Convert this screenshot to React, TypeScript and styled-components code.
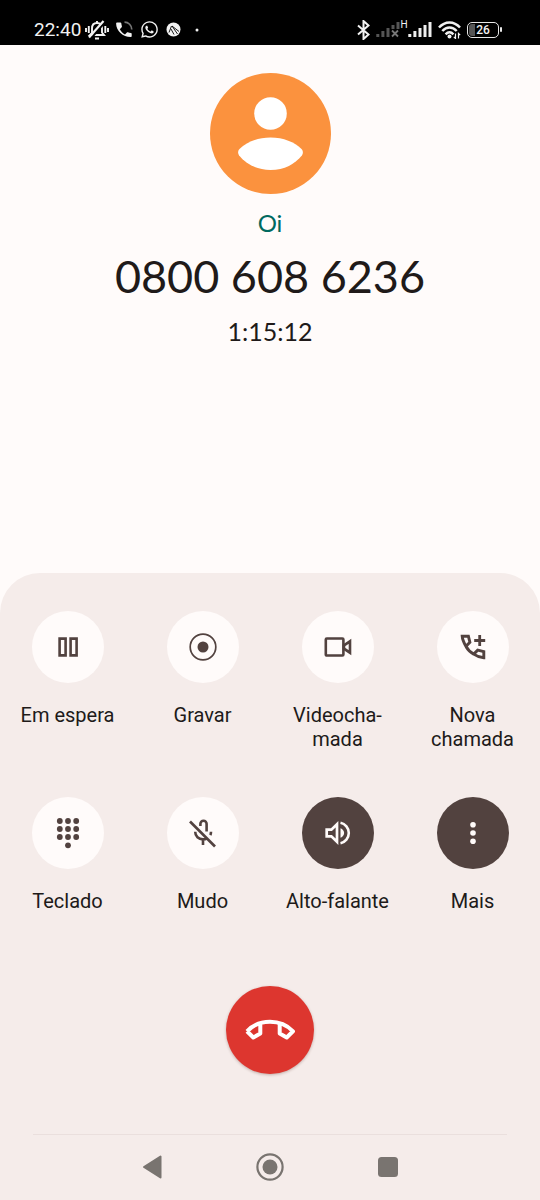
import React from "react";
import styled, { createGlobalStyle, css } from "styled-components";
import { FaWhatsapp } from "react-icons/fa";

const GlobalStyle = createGlobalStyle`
  *, *::before, *::after { box-sizing: border-box; }
  body {
    margin: 0;
    background: #fffbfa;
    font-family: Roboto, "Liberation Sans", sans-serif;
  }
`;

const Screen = styled.div`
  display: flex;
  flex-direction: column;
  min-height: 100vh;
  background: #fffbfa;
  color: #201a19;
`;

const StatusBar = styled.header`
  display: flex;
  justify-content: space-between;
  align-items: center;
  height: 45px;
  padding: 14px 38px 0 34px;
  background: #000;
  color: #f2f2f2;
`;

const StatusGroup = styled.div<{ $gap: number }>`
  display: flex;
  align-items: center;
  gap: ${(p) => p.$gap}px;
`;

const Clock = styled.time`
  font-size: 19px;
  line-height: 24px;
  font-weight: 400;
`;

const Notifications = styled(StatusGroup)`
  padding-left: 4px;
`;

const Network = styled.span`
  display: flex;
  align-items: flex-start;
`;

const NetworkType = styled.span`
  width: 8px;
  font-size: 10px;
  line-height: 8px;
  text-align: center;
`;

const Battery = styled.span`
  display: flex;
  align-items: center;
  gap: 1px;

  &::after {
    content: "";
    width: 2px;
    height: 5px;
    border-radius: 1px;
    background: #e8e8e8;
  }
`;

const BatteryCell = styled.span`
  width: 32px;
  height: 16px;
  border: 1px solid #e8e8e8;
  border-radius: 5px;
  background: linear-gradient(90deg, #555 0 7px, transparent 7px);
  background-clip: content-box;
  padding: 1px;
  font-size: 12px;
  line-height: 12px;
  font-weight: 500;
  text-align: center;
`;

const Caller = styled.main`
  display: flex;
  flex-direction: column;
  align-items: center;
  padding: 28px 16px 32px;
  font-family: Lato, "Open Sans", sans-serif;
  text-align: center;
`;

const Avatar = styled.svg`
  width: 121px;
  height: 121px;
`;

const Carrier = styled.p`
  margin: 13px 0 0;
  font-size: 24px;
  line-height: 32px;
  color: #00695f;
`;

const PhoneNumber = styled.h1`
  margin: 9px 0 0;
  font-size: 45px;
  line-height: 56px;
  font-weight: 400;
`;

const Duration = styled.time`
  margin-top: 11px;
  font-size: 25px;
  line-height: 32px;
`;

const Panel = styled.section`
  display: flex;
  flex-direction: column;
  align-items: center;
  margin-top: auto;
  padding-top: 38px;
  border-radius: 40px 40px 0 0;
  background: #f5ecea;
`;

const Actions = styled.div`
  display: grid;
  grid-template-columns: repeat(4, 1fr);
  row-gap: 46px;
  width: 100%;
`;

const Action = styled.label`
  display: flex;
  flex-direction: column;
  align-items: center;
  gap: 20px;
  font-size: 20px;
  line-height: 24px;
  text-align: center;
`;

const round = css`
  display: flex;
  align-items: center;
  justify-content: center;
  padding: 0;
  border: 0;
  border-radius: 50%;
  cursor: pointer;
`;

const ActionButton = styled.button<{ $active?: boolean }>`
  ${round}
  width: 72px;
  height: 72px;
  background: ${(p) => (p.$active ? "#52423f" : "#fffbfa")};
  color: ${(p) => (p.$active ? "#fffbfa" : "#52423f")};
`;

const HangUp = styled.button`
  ${round}
  width: 88px;
  height: 88px;
  margin-top: 73px;
  background: #dd362f;
  color: #fff;
  box-shadow: 0 1px 3px rgba(80, 30, 20, 0.3);
`;

const NavBar = styled.nav`
  display: flex;
  justify-content: center;
  gap: 90px;
  align-self: stretch;
  margin: 60px 33px 0;
  padding: 18px 0 19px;
  border-top: 1px solid #eadfdd;
`;

const NavButton = styled.button`
  ${round}
  width: 28px;
  height: 28px;
  background: none;
  color: #797470;
`;

const Glyph = ({ children }: { children: React.ReactNode }) => (
  <svg width="32" height="32" viewBox="0 0 32 32" fill="none" stroke="currentColor" strokeWidth="2.6" aria-hidden="true">
    {children}
  </svg>
);

const icons = {
  hold: (
    <Glyph>
      <path d="M7.6 7.6h6v16.8h-6zM18.6 7.6h6v16.8h-6z" />
    </Glyph>
  ),
  record: (
    <Glyph>
      <circle cx="16" cy="16" r="12.8" strokeWidth="1.7" />
      <circle cx="16" cy="16" r="5.5" fill="currentColor" stroke="none" />
    </Glyph>
  ),
  video: (
    <Glyph>
      <rect x="3.8" y="7.5" width="17.6" height="17" rx="1" />
      <path d="M22 14.300l6-4v11.400L22 17.700z" />
    </Glyph>
  ),
  add: (
    <Glyph>
      <path
        d="M5.200 5.200h6.200l1.500 6.100-4 4C7 12 5.400 8.800 5.200 5.200zM8.900 15.300c1.800 3.400 4.400 6 7.800 7.800M16.700 23.100l4-4 6.100 1.500v6.200c-3.600-.2-7-1.600-10.100-3.700z"
        strokeWidth="2.900"
      />
      <path d="M22.700 4v11M17.200 9.500h11" strokeWidth="2.800" />
    </Glyph>
  ),
  keypad: (
    <Glyph>
      <g fill="currentColor" stroke="none">
        {[4, 12, 20].map((y) => [7.8, 16, 24.2].map((x) => <circle key={`${x}-${y}`} cx={x} cy={y} r="2.9" />))}
        <circle cx="16" cy="28.300" r="2.900" />
      </g>
    </Glyph>
  ),
  mute: (
    <Glyph>
      <path d="M13.400 9V6.800a3.100 3.100 0 0 1 6.200 0V14.500M8.200 14.800c0 4.500 3.400 7.600 7.800 7.600 1.500 0 2.900-.4 4-1.100M16 22.400v5.600M24 14.800c0 1.200-.2 2.300-.7 3.300" strokeWidth="2.600" />
      <path d="M3 4.500l25 25" strokeWidth="2.700" />
    </Glyph>
  ),
  speaker: (
    <Glyph>
      <path d="M4.700 12.700h4.700l5.600-5.400v17.400l-5.600-5.400H4.700z" strokeWidth="2.700" />
      <path d="M18.500 11.200c2.200.9 3.600 2.700 3.600 4.800s-1.400 3.900-3.600 4.800z" fill="currentColor" stroke="none" />
      <path d="M18.500 5.800c4.700 1 8.300 5.200 8.300 10.200s-3.600 9.200-8.300 10.200" />
    </Glyph>
  ),
  more: (
    <Glyph>
      <g fill="currentColor" stroke="none">
        <circle cx="16" cy="7.800" r="2.800" />
        <circle cx="16" cy="16" r="2.800" />
        <circle cx="16" cy="24.200" r="2.800" />
      </g>
    </Glyph>
  ),
};

const actions: { id: keyof typeof icons; label: React.ReactNode; active?: boolean }[] = [
  { id: "hold", label: "Em espera" },
  { id: "record", label: "Gravar" },
  { id: "video", label: <>Videocha-<br />mada</> },
  { id: "add", label: <>Nova<br />chamada</> },
  { id: "keypad", label: "Teclado" },
  { id: "mute", label: "Mudo" },
  { id: "speaker", label: "Alto-falante", active: true },
  { id: "more", label: "Mais", active: true },
];

const SilentIcon = () => (
  <svg width="24" height="20" viewBox="0 0 24 20" fill="none" stroke="currentColor" strokeWidth="1.900" aria-hidden="true">
    <path d="M7 14.500V8.500C7 5 9 3 12 3s5 2 5 5.500v4l2 2.500H5l2-2M12 1v2M10 18.500h4" />
    <path d="M1 8v4M3.800 6v7M20.300 6v7M23 8v4" />
    <path d="M5.500 19L20 2" strokeWidth="2" stroke="#000" />
    <path d="M4 17.500L18.500 1" strokeWidth="2.200" />
  </svg>
);

const CallIcon = () => (
  <svg width="17" height="17" viewBox="0 0 17 17" fill="none" aria-hidden="true">
    <path
      d="M1 1.500h3.400c.5 0 .8.300.9.800.1 1.200.3 2.100.6 3 .1.400 0 .7-.2 1L3.800 8.200c1.200 2.300 2.900 4 5.200 5.200l1.900-1.900c.3-.3.600-.3 1-.2.900.300 1.900.500 3 .600.500 0 .8.400.8.900V15c0 .6-.4 1-1 1C6.800 16 .2 10 .1 2.500c0-.6.4-1 .9-1z"
      fill="currentColor"
    />
    <path d="M8.500 1.200c4 0 7.200 3 7.300 7.300" stroke="#777" strokeWidth="1.700" />
  </svg>
);

const BrandIcon = () => (
  <svg width="15" height="15" viewBox="0 0 15 15" aria-hidden="true">
    <circle cx="7.500" cy="7.500" r="7" fill="currentColor" />
    <path d="M5.500 4L3 10.500M6 4l5.500 8M6 4l7 5.500M5 7l3 5.500" stroke="#000" strokeWidth="0.900" />
  </svg>
);

const BluetoothIcon = () => (
  <svg width="13" height="20" viewBox="0 0 13 20" fill="none" stroke="currentColor" strokeWidth="2" aria-hidden="true">
    <path d="M1 5.500l10.500 9L6.500 19V1l5 4.500L1 14.500" />
  </svg>
);

const SignalIcon = ({ missing }: { missing?: boolean }) => (
  <svg width="24" height="17" viewBox="0 0 24 17" stroke={missing ? "#555" : "#eee"} strokeWidth="3" aria-hidden="true">
    <path d={missing ? "M1.800 16v-3M6.900 16V10M12 16V7M17 8V4M22 8V1" : "M1.800 16v-3M6.900 16V10M12 16V7M17 16V4M22 16V1"} />
    {missing && <path d="M16 9.500l6 6M22 9.500l-6 6" strokeWidth="1.800" stroke="#777" />}
  </svg>
);

const WifiIcon = () => (
  <svg width="23" height="18" viewBox="0 0 23 18" fill="none" stroke="currentColor" strokeWidth="2.500" aria-hidden="true">
    <path d="M1 6.500C7-.3 16-.3 22 6.500M4.300 10c4.300-4.700 10.100-4.700 14.400 0M7.600 13.300c2.500-2.600 5.300-2.600 7.800 0" />
    <circle cx="11.500" cy="15.500" r="2" fill="currentColor" stroke="none" />
    <path d="M17.500 12.500v5l-1.700-1.700M20.500 17.500v-5l1.700 1.700" strokeWidth="1.200" />
  </svg>
);

export default function App() {
  return (
    <>
      <GlobalStyle />
      <Screen>
        <StatusBar>
          <StatusGroup $gap={0}>
            <Clock>22:40</Clock>
            <Notifications $gap={7}>
              <SilentIcon />
              <CallIcon />
              <FaWhatsapp size={19} />
              <BrandIcon />
              <svg width="18" height="4" viewBox="0 0 18 4" aria-hidden="true">
                <circle cx="9" cy="2" r="1.500" fill="currentColor" />
              </svg>
            </Notifications>
          </StatusGroup>
          <StatusGroup $gap={6}>
            <BluetoothIcon />
            <Network>
              <SignalIcon missing />
              <NetworkType>H</NetworkType>
              <SignalIcon />
            </Network>
            <WifiIcon />
            <Battery>
              <BatteryCell>26</BatteryCell>
            </Battery>
          </StatusGroup>
        </StatusBar>

        <Caller>
          <Avatar viewBox="0 0 121 121" aria-hidden="true">
            <circle cx="60.500" cy="60.500" r="60.500" fill="#fb923e" />
            <circle cx="60.500" cy="40.500" r="16.300" fill="#fff" />
            <path
              d="M60.500 64.500c13 0 24 4.500 31 11.500 1.700 1.800 1.800 4.500.4 6.500C85 91 74.500 97 60.500 97S36 91 29.100 82.500c-1.400-2-1.300-4.700.4-6.500 7-7 18-11.500 31-11.500z"
              fill="#fff"
            />
          </Avatar>
          <Carrier>Oi</Carrier>
          <PhoneNumber>0800 608 6236</PhoneNumber>
          <Duration>1:15:12</Duration>
        </Caller>

        <Panel>
          <Actions>
            {actions.map(({ id, label, active }) => (
              <Action key={id} htmlFor={id}>
                <ActionButton id={id} type="button" $active={active}>
                  {icons[id]}
                </ActionButton>
                <span>{label}</span>
              </Action>
            ))}
          </Actions>

          <HangUp type="button" aria-label="Encerrar chamada">
            <svg width="52" height="24" viewBox="34.500 48 52 24" fill="none" stroke="currentColor" strokeWidth="4" strokeLinejoin="round" aria-hidden="true">
              <path d="M37.500 61.300C44 54.500 52 51.800 60.500 51.800s16.500 2.700 23 9.500l-6.300 6.200-7-4V54M37.500 61.300l6.300 6.200 7-4V54" />
            </svg>
          </HangUp>

          <NavBar>
            <NavButton type="button" aria-label="Voltar">
              <svg width="28" height="28" viewBox="0 0 28 28" aria-hidden="true">
                <path d="M6 14L22.500 3.500v21z" fill="currentColor" stroke="currentColor" strokeWidth="2" strokeLinejoin="round" />
              </svg>
            </NavButton>
            <NavButton type="button" aria-label="Início">
              <svg width="28" height="28" viewBox="0 0 28 28" aria-hidden="true">
                <circle cx="14" cy="14" r="12.600" fill="none" stroke="currentColor" strokeWidth="2.200" />
                <circle cx="14" cy="14" r="7.500" fill="currentColor" />
              </svg>
            </NavButton>
            <NavButton type="button" aria-label="Recentes">
              <svg width="28" height="28" viewBox="0 0 28 28" aria-hidden="true">
                <rect x="4" y="4" width="20" height="20" rx="3.500" fill="currentColor" />
              </svg>
            </NavButton>
          </NavBar>
        </Panel>
      </Screen>
    </>
  );
}
